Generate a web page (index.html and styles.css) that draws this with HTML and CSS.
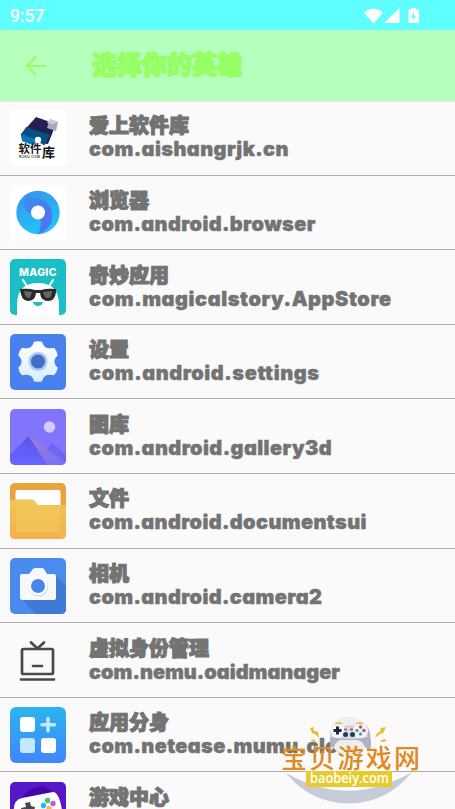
FILE: index.html
```html
<!DOCTYPE html>
<html lang="zh-CN">
<head>
<meta charset="utf-8">
<title>选择你的英雄</title>
<link rel="stylesheet" href="styles.css">
</head>
<body>
<div class="screen">
<div class="status">
  <span class="clock">9:57</span>
  <svg class="signals" width="60" height="20" viewBox="0 0 60 20" fill="#fff">
    <path d="M0 5.500Q9.500-2 19 5.500L9.500 16.500Z"/><path d="M21 16V15L35.500 1V16Z"/>
    <path fill-rule="evenodd" d="M47 1h5v1.500h2q1 0 1 1V15q0 1-1 1h-8.500q-1 0-1-1V3.500q0-1 1-1H47ZM50 5l-3 5h2v4l3-5h-2Z"/>
  </svg>
</div>
<header class="bar">
  <svg class="back" width="22" height="22" viewBox="0 0 22 22"><path d="M11 1.500 2 11l9 9M2 11h19" fill="none" stroke="#96ff64" stroke-width="2.200"/></svg>
  <h1>选择你的英雄</h1>
</header>
<ul class="apps">
  <li>
    <svg class="icon" viewBox="0 0 56 56"><rect width="56" height="56" fill="#fff"/>
      <path d="M26 7 46 14 38 34 12 31 11 24Z" fill="#242052"/><path d="m16 17 24 8-6 11-21-5-1-7Z" fill="#075083"/><path d="m12 24 17 7-4 5-13-5Z" fill="#0878b5"/>
      <path d="m40 9 8 3-2 9-9-3Z" fill="#a8adb3"/><path d="m40 9 8 3-5 2-6-1Z" fill="#c9ccd0"/>
      <circle cx="28" cy="30" r="3.200" fill="#fff"/><path d="M21 38q1-5 7-5t7 5Z" fill="#fff"/>
      <text class="t-logo" x="8.500" y="43.200" textLength="23">软件</text><text class="t-logo big" x="32" y="46.500">库</text>
      <text class="t-tiny" x="9" y="47.500" textLength="21">RJKU.COM</text></svg>
    <div class="info"><b>爱上软件库</b><span class="w5">com.aishangrjk.cn</span></div>
  </li>
  <li>
    <svg class="icon" viewBox="0 0 56 56"><defs><linearGradient id="ba" x1="0" y1="0" x2=".4" y2="1"><stop stop-color="#3b8fee"/><stop offset="1" stop-color="#20c4f6"/></linearGradient><linearGradient id="bb" x1="0" y1="0" x2=".7" y2="1"><stop stop-color="#3a8dee"/><stop offset="1" stop-color="#5273f2"/></linearGradient></defs>
      <rect width="56" height="56" rx="5" fill="#fff"/><circle cx="28" cy="27.500" r="21.700" fill="url(#ba)"/>
      <path d="M19 7.800Q11 17 16 25 20 30 28 28 34 38 28 49.200 39 46 42 35C44 22 35 14 27 13.500Q18 13 19 7.800Z" fill="url(#bb)"/>
      <circle cx="28" cy="27.500" r="7" fill="#fff"/></svg>
    <div class="info"><b>浏览器</b><span class="w4">com.android.browser</span></div>
  </li>
  <li>
    <svg class="icon" viewBox="0 0 56 56"><rect width="56" height="56" rx="5" fill="#19bfc4"/>
      <text class="t-magic" x="9" y="17" textLength="37.500">MAGIC</text>
      <path d="m13 21 5 8M43 21l-5 8" stroke="#fff" stroke-width="2" stroke-linecap="round"/>
      <path d="M7 56V46Q7 24 28 24t21 22v10Z" fill="#fff"/><path d="M23 43h10q-1 4-5 4t-5-4Z" fill="#19bfc4"/>
      <path d="M10 30q9-1 15 1h6q6-2 15-1v3q-1 9-8 9-7 0-8-8h-4q-1 8-8 8-7 0-8-12Z" fill="#292929"/><path d="m14 32 8 1-2 6q-5 1-6-7m19 1 9-1q0 7-4 7-4 0-5-6Z" fill="#666"/></svg>
    <div class="info"><b>奇妙应用</b><span class="w6">com.magicalstory.AppStore</span></div>
  </li>
  <li>
    <svg class="icon" viewBox="0 0 56 56"><defs><linearGradient id="g" x2="0" y2="1"><stop stop-color="#fff"/><stop offset="1" stop-color="#d7effc"/></linearGradient></defs><rect width="56" height="56" rx="5" fill="#4a80ee"/>
      <path d="M24 7.700q4-1 8 0 1.500 5 4.500 6t7.500 0q3 3 3.800 7.500-3.500 3-3.500 6.300t3.500 6.300q-.8 4.500-3.800 7.500-4.500-1-7.500 0t-4.500 6q-4 1-8 0-1.500-5-4.500-6t-7.500 0q-3-3-3.800-7.500 3.500-3 3.500-6.300t-3.500-6.300q.8-4.500 3.800-7.500 4.500 1 7.500 0t4.500-6Z" fill="url(#g)"/>
      <circle cx="28" cy="27.500" r="9.500" fill="#a9c6f5"/><circle cx="28" cy="27.500" r="7" fill="#416fc5"/></svg>
    <div class="info"><b>设置</b><span class="w6">com.android.settings</span></div>
  </li>
  <li>
    <svg class="icon" viewBox="0 0 56 56"><defs><linearGradient id="m" x2="0" y2="1"><stop stop-color="#5a55ef"/><stop offset="1" stop-color="#6866ff"/></linearGradient><linearGradient id="n" x2="1" y2="1"><stop stop-color="#a77fc0"/><stop offset="1" stop-color="#7170ff"/></linearGradient><clipPath id="r"><rect width="56" height="56" rx="5"/></clipPath></defs>
      <g clip-path="url(#r)"><rect width="56" height="56" fill="#8275fd"/><path d="m28 52 14-18 14 12v10H28Z" fill="#6f67f3"/><path d="M0 46 18.500 27 38 56H0Z" fill="url(#m)"/><path d="M18.500 27 56 54v2H38Z" fill="url(#n)"/></g><circle cx="39.500" cy="18" r="5.700" fill="#d9c9fa"/></svg>
    <div class="info"><b>图库</b><span class="w5">com.android.gallery3d</span></div>
  </li>
  <li>
    <svg class="icon" viewBox="0 0 56 56"><defs><linearGradient id="f" x2="0" y2="1"><stop stop-color="#edc550"/><stop offset="1" stop-color="#f6b04f"/></linearGradient></defs><rect width="56" height="56" rx="5" fill="#e8a33b"/><rect x="5.500" y="7" width="45" height="30" rx="2" fill="#fff"/><path d="M0 16.500h23q2 1 5 5.500h28v29q0 5-5 5H5q-5 0-5-5Z" fill="url(#f)"/><path d="M6 17h17q2 1 5 5.500h22V49H6Z" fill="#f2c95e" opacity=".6"/></svg>
    <div class="info"><b>文件</b><span class="w4">com.android.documentsui</span></div>
  </li>
  <li>
    <svg class="icon" viewBox="0 0 56 56"><rect width="56" height="56" rx="5" fill="#4b8bf0"/><path d="M45 17 56 28v23q0 5-5 5H26L11 41Z" fill="#4279d6"/><path d="M12 16h7l4-5q1-1 2-1h7q1 0 2 1l3 5h7q2 0 2 2v22q0 2-2 2H12q-2 0-2-2V18q0-2 2-2Z" fill="#f7f8f9"/><circle cx="28.500" cy="29" r="9.500" fill="#d5dbe2"/><circle cx="28" cy="28" r="9.300" fill="#fff"/><circle cx="28" cy="28" r="7" fill="#4685eb"/></svg>
    <div class="info"><b>相机</b><span class="w4">com.android.camera2</span></div>
  </li>
  <li>
    <svg class="icon" viewBox="0 0 56 56" fill="none" stroke="#454a4f" stroke-width="2.700" stroke-linecap="round"><rect x="12" y="17" width="31" height="25" rx="1.500"/><path d="m21 10.500 6.500 6 6.500-6M23 34h9M11 47.500h33"/></svg>
    <div class="info"><b>虚拟身份管理</b><span class="w1">com.nemu.oaidmanager</span></div>
  </li>
  <li>
    <svg class="icon" viewBox="0 0 56 56"><defs><linearGradient id="c" x2="0" y2="1"><stop stop-color="#2bb5ef"/><stop offset="1" stop-color="#4285fb"/></linearGradient></defs><rect width="56" height="56" rx="6" fill="url(#c)"/><rect x="10" y="10" width="15" height="15" rx="3" fill="#fff"/><rect x="31" y="31" width="15" height="15" rx="3" fill="#fff"/><rect x="10" y="31" width="15" height="15" rx="3" fill="#c4e8ff"/><path d="M38 11.500v12.500M32 17.700h12.500" stroke="#c4e8ff" stroke-width="3.500" stroke-linecap="round"/></svg>
    <div class="info"><b>应用分身</b><span class="w4">com.netease.mumu.clone</span></div>
  </li>
  <li>
    <svg class="icon" viewBox="0 0 56 56"><rect width="56" height="56" rx="5" fill="#5816c9"/><path d="M8 20Q28-7 46 13L35 27Z" fill="#4307a8"/><path d="M4 34Q2 18 12 16L43 10q6 0 9 18v28H4Z" fill="#fff"/><path d="m15 21 5-1 1 4 4 1-1 5-12 1-1-5 5-1Z" fill="#484750"/><circle cx="37.500" cy="18.500" r="2.700" fill="#3bcf60"/><circle cx="43" cy="21.500" r="2.700" fill="#bf5be6"/><circle cx="33.500" cy="23.500" r="2.700" fill="#22b8f1"/><circle cx="39" cy="26.500" r="2.700" fill="#f7be36"/></svg>
    <div class="info"><b>游戏中心</b></div>
  </li>
</ul>
<svg class="watermark" width="190" height="104" viewBox="0 0 190 104">
  <circle cx="84" cy="31" r="19.500" fill="#eeeeec"/>
  <path d="M21 68Q84 104 147 67 122 98 84 98.500 45 98 21 68Z" fill="#c7cad8"/>
  <path d="M69 19q15 4 30 0 7 2 7 23-1 5-6 0-3-7-9-7H77q-6 0-8 7-4 1-4-4 0-17 4-19Z" fill="#aeb2c2"/>
  <path d="M72 20q12 3 24 0 6 3 7 12-17 4-38 0 2-11 7-12Z" fill="#d8dbe6"/><circle cx="73" cy="25.500" r="7.500" fill="#f4f5f8"/><circle cx="95.500" cy="25.500" r="7.500" fill="#f4f5f8"/>
  <path d="M72.500 21.500v8M68.500 25.500h8" stroke="#192b3b" stroke-width="3"/><g fill="#d54c56"><circle cx="95.500" cy="22" r="1.700"/><circle cx="92" cy="25.500" r="1.700" fill="#48a6bc"/><circle cx="99" cy="25.500" r="1.700"/><circle cx="95.500" cy="29" r="1.700" fill="#48a6bc"/><path d="M79 23.500h3v2h-3zm6 0h3v2h-3z"/></g><circle cx="80.500" cy="29.500" r="2.500" fill="#203f50"/><circle cx="87.500" cy="29.500" r="2.500" fill="#203f50"/>
  <path d="M70 18.700q3-1.500 7 0M91 18.700q3-1.500 7 0" stroke="#e2b84c" fill="none" stroke-width="1.500"/>
  <path d="m45 23 3-1 1 4 4 1 1 6-4-4-3-1Zm76-1-5 1-1 4-3 1-2 5 5-4 3-1ZM45 36l4-2 2 3-4-1Zm70 0 4-2 3 2-5 1Z" fill="#e9b92e"/>
  <text class="t-mark" x="16" y="62.500" textLength="139">宝贝游戏网</text>
  <path d="M41 66h86v16H41Z" fill="#e8cb2b"/>
  <text class="t-url" x="45" y="78" textLength="79" lengthAdjust="spacingAndGlyphs">baobeiy.com</text>
</svg>
</div>
</body>
</html>
```
FILE: styles.css
```css
* { box-sizing: border-box; }
body { margin: 0; background: #fafafa; }
.screen { position: relative; width: 455px; height: 809px; overflow: hidden; font-family: "Inter", "Noto Sans CJK SC", sans-serif; color: #737373; }
.status { height: 30px; padding: 2px 33px 0 10px; background: #60ffff; display: flex; align-items: center; justify-content: space-between; }
.clock { font: 500 17.5px/28px Roboto, sans-serif; color: #fff; }
.signals { margin: 2px -2px 0 0; }
.bar { height: 72px; background: #b6ffbd; display: flex; align-items: center; padding: 0 0 2px 25px; gap: 45px; border-bottom: 1px solid #e0ece1; }
.bar h1 { margin: -4px 0 0; font: 900 25px/34px "Noto Sans CJK SC", sans-serif; color: #96ff64; -webkit-text-stroke: 1.6px #96ff64; }
.back { flex: none; margin-top: 2px; }
.apps { list-style: none; margin: -1px 0 0; padding: 0; }
.apps li { height: 74.6px; padding-left: 10px; display: flex; align-items: center; gap: 23px; border-bottom: 1.5px solid #ababab; }
.icon { width: 56px; height: 56px; flex: none; margin-top: 1px; }
.info { align-self: flex-start; padding-top: 12.4px; display: flex; flex-direction: column; white-space: nowrap; }
.info b { font: 900 20px/24px "Noto Sans CJK SC", sans-serif; -webkit-text-stroke: 1.2px #737373; }
.info span { font: 900 20px/24px Inter, sans-serif; font-feature-settings: "cv11"; -webkit-text-stroke: .4px #737373; }
.info .w1 { letter-spacing: 0; }
.info .w4 { letter-spacing: .36px; }
.info .w5 { letter-spacing: .42px; }
.info .w6 { letter-spacing: .57px; }
.t-logo { font: 700 11.5px "Noto Sans CJK SC", sans-serif; fill: #171717; }
.t-logo.big { font-size: 13px; }
.t-tiny { font: 700 3.5px "Liberation Sans", sans-serif; fill: #444; }
.t-magic { font: 800 10.5px Inter, sans-serif; fill: #fff; }
.watermark { position: absolute; left: 265px; top: 705px; }
.t-mark { font: 500 26px "Noto Sans CJK SC", sans-serif; fill: #e08a20; }
.t-url { font: 600 14px "Open Sans", sans-serif; fill: #fff; }
```
